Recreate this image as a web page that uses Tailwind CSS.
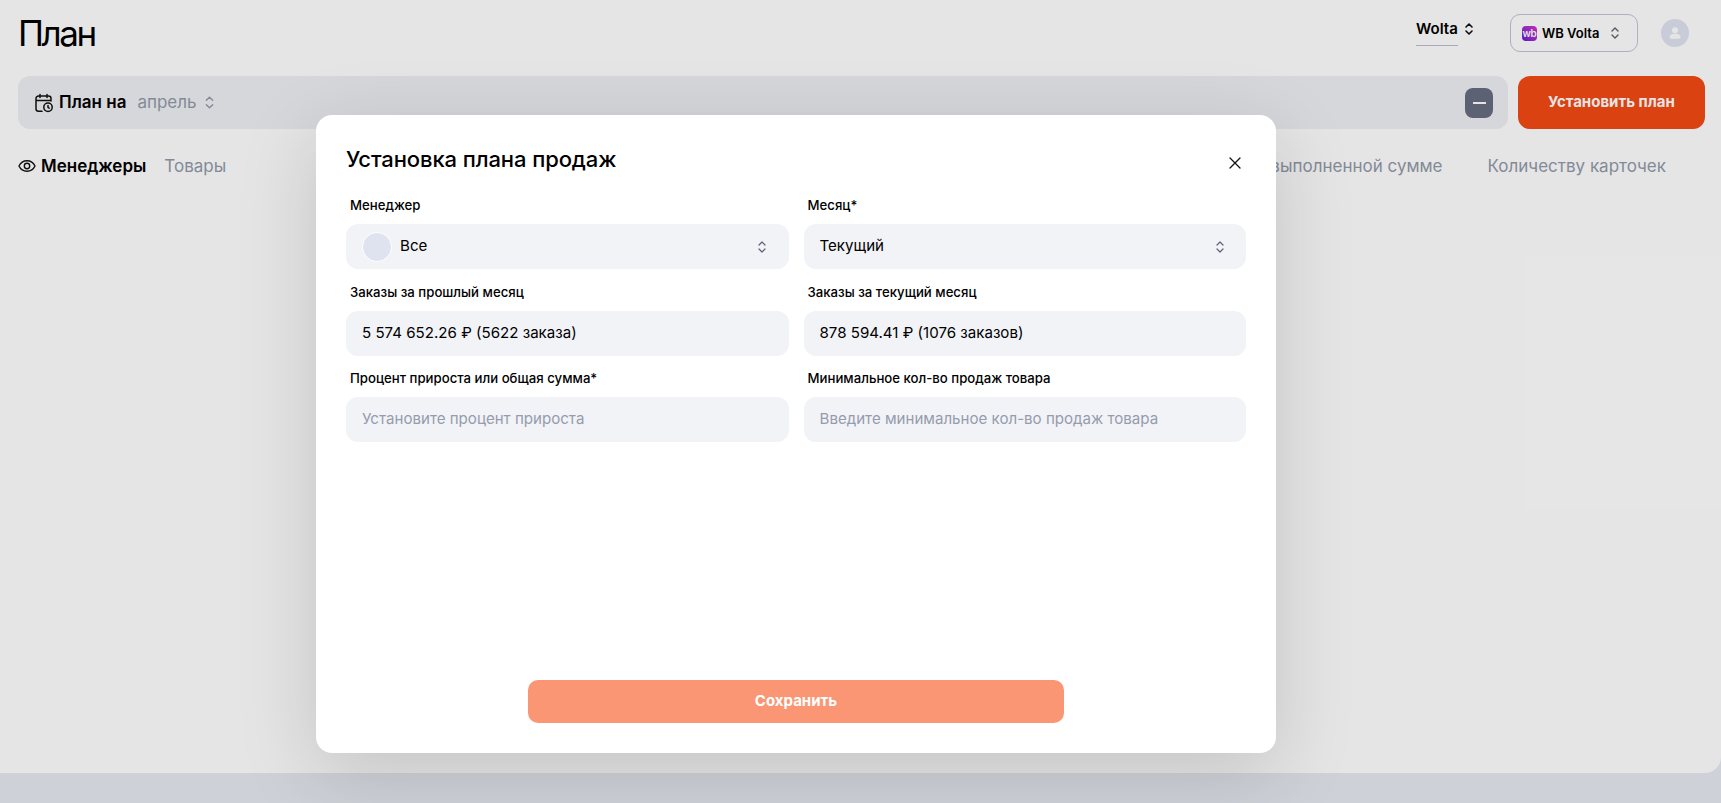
<!DOCTYPE html>
<html lang="ru"><head><meta charset="utf-8"><script src="https://cdn.jsdelivr.net/npm/@tailwindcss/browser@4"></script></head>
<body class="relative h-[803px] w-[1721px] overflow-hidden bg-[#e6e9f0] font-['Inter',sans-serif] text-black">
<main class="h-[773px] rounded-br-[16px] bg-white pl-[18px] pr-[16px]">
  <header class="flex h-[76px] items-start justify-between">
    <h1 class="mt-[10px] text-[35px] leading-[46px] font-normal tracking-[-2.4px]">План</h1>
    <div class="flex items-start">
      <div class="mt-[18px] flex items-start gap-[4px]">
        <span class="block h-[28px] w-[42px] border-b border-[#b8bfcf] text-[15px] leading-[22px] font-semibold">Wolta</span>
        <svg class="mt-[4px] h-[14px] w-[14px]" viewBox="0 0 14 14" fill="none" stroke="#111" stroke-width="1.6" stroke-linecap="round" stroke-linejoin="round"><path d="M4 5l3-3 3 3M4 9l3 3 3-3"/></svg>
      </div>
      <div class="mt-[14px] ml-[34px] flex h-[38px] w-[128px] items-center rounded-[10px] border border-[#c0c6d6] pl-[11px]">
        <span class="flex h-[15px] w-[15px] items-center justify-center rounded-[4px] bg-linear-to-tr from-[#6a0fd8] to-[#d431c8] text-[10px] leading-[15px] font-semibold tracking-[-0.4px] text-white">wb</span>
        <span class="ml-[5px] text-[13px] leading-[20px] font-semibold">WB Volta</span>
        <svg class="ml-[9px] h-[14px] w-[14px]" viewBox="0 0 14 14" fill="none" stroke="#5d6275" stroke-width="1.4" stroke-linecap="round" stroke-linejoin="round"><path d="M4 5l3-3 3 3M4 9l3 3 3-3"/></svg>
      </div>
      <div class="mt-[19px] ml-[23px] mr-[16px] flex h-[28px] w-[28px] items-center justify-center rounded-full bg-[#dfe4f1]">
        <svg class="h-[14px] w-[14px]" viewBox="0 0 14 14" fill="#fff"><circle cx="7" cy="4.3" r="3"/><path d="M1.500 11c0-2.200 2.400-3.200 5.500-3.200s5.500 1 5.500 3.200c0 1-.8 1.700-1.800 1.700H3.300C2.300 12.700 1.500 12 1.500 11z"/></svg>
      </div>
    </div>
  </header>
  <div class="flex h-[53px] gap-[10px]">
    <div class="flex flex-1 items-center rounded-[12px] bg-[#eff0f3] pl-[16px] pr-[15px]">
      <svg class="h-[20px] w-[20px]" viewBox="0 0 20 20" fill="none" stroke="#111" stroke-width="1.5" stroke-linecap="round" stroke-linejoin="round"><path d="M8 18.300H4.500A2.500 2.500 0 0 1 2 15.800V5.500A2.500 2.500 0 0 1 4.500 3h10A2.500 2.500 0 0 1 17 5.500V8M2 7.500h15M6 1.500v3M13 1.500v3"/><circle cx="14" cy="14.300" r="4.200"/><path d="M14 12.400v2l1.200.8"/></svg>
      <span class="ml-[5px] text-[17px] font-semibold">План на</span>
      <span class="ml-[11px] text-[17px] text-[#929aa9]">апрель</span>
      <svg class="ml-[5px] h-[15px] w-[15px]" viewBox="0 0 14 14" fill="none" stroke="#929aa9" stroke-width="1.3" stroke-linecap="round" stroke-linejoin="round"><path d="M4 5l3-3 3 3M4 9l3 3 3-3"/></svg>
      <button class="ml-auto flex h-[30px] w-[28px] items-center justify-center rounded-[8px] bg-[#676c82]"><span class="h-[2px] w-[13px] bg-white"></span></button>
    </div>
    <button class="h-[53px] w-[187px] rounded-[12px] bg-[#f34a14] text-[15px] font-bold text-white">Установить план</button>
  </div>
  <nav class="mt-[27px] flex items-center justify-between text-[17px] leading-[20px]">
    <div class="flex items-center">
      <svg class="h-[18px] w-[18px]" viewBox="0 0 18 18" fill="none" stroke="#111" stroke-width="1.4"><path d="M1 9C2.600 5.600 5.500 3.800 9 3.800s6.400 1.800 8 5.200c-1.600 3.400-4.500 5.200-8 5.200S2.600 12.400 1 9z"/><circle cx="9" cy="9" r="2.700"/></svg>
      <span class="ml-[5px] font-semibold">Менеджеры</span>
      <span class="ml-[18px] text-[#929aa9]">Товары</span>
    </div>
    <div class="flex items-center gap-[45px] pr-[39px] text-[#929aa9]">
      <span>По выполненной сумме</span><span>Количеству карточек</span>
    </div>
  </nav>
</main>
<div class="absolute inset-0 bg-black/10">
  <section class="absolute left-[316px] top-[115px] flex h-[638px] w-[960px] flex-col rounded-[16px] bg-white px-[30px] pb-[30px] shadow-[0_20px_80px_rgba(0,0,0,0.15)]">
    <div class="flex h-[76px] items-center justify-between">
      <h2 class="mt-[12px] text-[22px] font-medium tracking-[-0.1px]">Установка плана продаж</h2>
      <svg class="mr-[5px] mt-[20px] h-[12px] w-[12px]" viewBox="0 0 12 12" fill="none" stroke="#111" stroke-width="1.3" stroke-linecap="round"><path d="M1 1l10 10M11 1L1 11"/></svg>
    </div>
    <div class="grid grid-cols-2 gap-x-[15px] gap-y-[8.5px]">
      <div>
        <p class="h-[33px] pl-[4px] pt-[4px] text-[13.2px] leading-[20px] font-medium">Менеджер</p>
        <div class="flex h-[45px] items-center rounded-[12px] bg-[#f2f3f7] pl-[16px] pr-[20px] text-[15.1px]">
          <span class="h-[30px] w-[30px] rounded-full border border-white bg-[#dfe2ef]"></span><span class="ml-[8px]">Все</span>
          <svg class="ml-auto h-[14px] w-[14px]" viewBox="0 0 14 14" fill="none" stroke="#5d6275" stroke-width="1.2" stroke-linecap="round" stroke-linejoin="round"><path d="M4 5l3-3 3 3M4 9l3 3 3-3"/></svg>
        </div>
      </div>
      <div>
        <p class="h-[33px] pl-[4px] pt-[4px] text-[13.2px] leading-[20px] font-medium">Месяц*</p>
        <div class="flex h-[45px] items-center rounded-[12px] bg-[#f2f3f7] pl-[16px] pr-[19px] text-[15.1px]">
          <span>Текущий</span>
          <svg class="ml-auto h-[14px] w-[14px]" viewBox="0 0 14 14" fill="none" stroke="#5d6275" stroke-width="1.2" stroke-linecap="round" stroke-linejoin="round"><path d="M4 5l3-3 3 3M4 9l3 3 3-3"/></svg>
        </div>
      </div>
      <div>
        <p class="h-[33px] pl-[4px] pt-[4px] text-[13.2px] leading-[20px] font-medium">Заказы за прошлый месяц</p>
        <div class="flex h-[45px] items-center rounded-[12px] bg-[#f2f3f7] pl-[16px] text-[15.1px]">5 574 652.26 ₽ (5622 заказа)</div>
      </div>
      <div>
        <p class="h-[33px] pl-[4px] pt-[4px] text-[13.2px] leading-[20px] font-medium">Заказы за текущий месяц</p>
        <div class="flex h-[45px] items-center rounded-[12px] bg-[#f2f3f7] pl-[16px] text-[15.1px]">878 594.41 ₽ (1076 заказов)</div>
      </div>
      <div>
        <p class="h-[33px] pl-[4px] pt-[4px] text-[13.2px] leading-[20px] font-medium">Процент прироста или общая сумма*</p>
        <div class="flex h-[45px] items-center rounded-[12px] bg-[#f2f3f7] pl-[16px] text-[15.1px] text-[#959cad]">Установите процент прироста</div>
      </div>
      <div>
        <p class="h-[33px] pl-[4px] pt-[4px] text-[13.2px] leading-[20px] font-medium">Минимальное кол-во продаж товара</p>
        <div class="flex h-[45px] items-center rounded-[12px] bg-[#f2f3f7] pl-[16px] text-[15.1px] text-[#959cad]">Введите минимальное кол-во продаж товара</div>
      </div>
    </div>
    <button class="mx-auto mt-auto h-[43px] w-[536px] rounded-[10px] bg-[#fb9674] text-[15px] font-bold text-white">Сохранить</button>
  </section>
</div>
</body></html>
